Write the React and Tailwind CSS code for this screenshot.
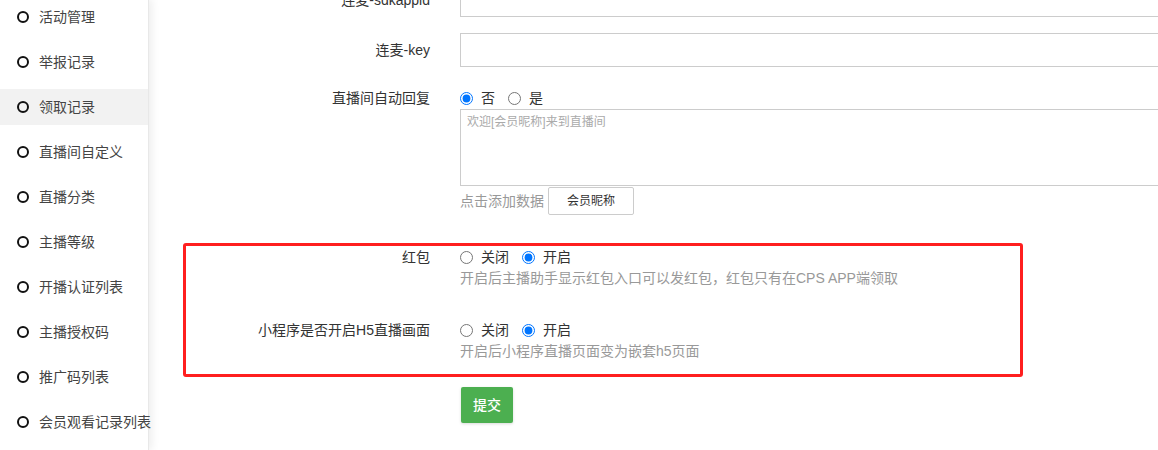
import { useState } from "react";

const menu = [
  "活动管理",
  "举报记录",
  "领取记录",
  "直播间自定义",
  "直播分类",
  "主播等级",
  "开播认证列表",
  "主播授权码",
  "推广码列表",
  "会员观看记录列表",
];

const Radio = ({ name, options, value, onChange }) => (
  <div className="flex items-center h-[22px]">
    {options.map((opt, i) => (
      <label
        key={opt}
        className={`flex items-center gap-[8px] ${i > 0 ? "ml-[13px]" : ""}`}
      >
        <input
          type="radio"
          name={name}
          className="m-0 w-[13px] h-[13px]"
          checked={value === opt}
          onChange={() => onChange(opt)}
        />
        <span className="text-[14px] leading-[22px] text-[#333]">{opt}</span>
      </label>
    ))}
  </div>
);

const Label = ({ children, className = "" }) => (
  <div
    className={`w-[281px] shrink-0 text-right text-[14px] text-[#333] ${className}`}
  >
    {children}
  </div>
);

const App = () => {
  const [reply, setReply] = useState("否");
  const [hongbao, setHongbao] = useState("开启");
  const [h5, setH5] = useState("开启");

  return (
    <div className="relative flex w-full h-[450px] overflow-hidden bg-white font-['Liberation_Sans','Noto_Sans_CJK_SC',sans-serif]">
      {/* 侧边菜单 */}
      <div className="w-[149px] shrink-0 bg-white border-r border-[#e8e8e8] shadow-[3px_0_8px_rgba(0,0,0,0.07)] z-10 -mt-[1px]">
        {menu.map((m) => (
          <div
            key={m}
            className={`flex items-center h-[36px] mb-[9px] pl-[17px] ${
              m === "领取记录" ? "bg-[#f2f2f2]" : ""
            }`}
          >
            <span className="w-[12px] h-[12px] rounded-full border-[2px] border-[#111] shrink-0" />
            <span className="ml-[10px] text-[14px] text-[#444] whitespace-nowrap">
              {m}
            </span>
          </div>
        ))}
      </div>

      {/* 表单 */}
      <div className="flex-1 min-w-0 overflow-hidden -mt-[17px]">
        <div className="flex items-center mb-[16px]">
          <Label className="leading-[34px]">连麦-sdkappid</Label>
          <div className="flex-1 ml-[30px]">
            <input className="block w-[calc(100%+10px)] h-[34px] border border-[#ccc] outline-none" />
          </div>
        </div>

        <div className="flex items-center mb-[20px]">
          <Label className="leading-[34px]">连麦-key</Label>
          <div className="flex-1 ml-[30px]">
            <input className="block w-[calc(100%+10px)] h-[34px] border border-[#ccc] outline-none" />
          </div>
        </div>

        <div className="flex items-start mb-[31px]">
          <Label className="leading-[22px]">直播间自动回复</Label>
          <div className="flex-1 ml-[30px]">
            <Radio
              name="reply"
              options={["否", "是"]}
              value={reply}
              onChange={setReply}
            />
            <textarea
              className="block w-[calc(100%+10px)] h-[77px] border border-[#ccc] px-[6px] py-[4px] text-[12px] leading-[16px] outline-none resize-none placeholder:text-[#aaa]"
              placeholder="欢迎[会员昵称]来到直播间"
            />
            <div className="flex items-center mt-[1px] h-[28px]">
              <span className="text-[14px] text-[#999]">点击添加数据</span>
              <button className="ml-[4px] w-[86px] h-[28px] border border-[#ccc] rounded-[2px] bg-white text-[12px] text-[#333]">
                会员昵称
              </button>
            </div>
          </div>
        </div>

        <div className="flex items-start mb-[31px]">
          <Label className="leading-[22px]">红包</Label>
          <div className="flex-1 ml-[30px]">
            <Radio
              name="hongbao"
              options={["关闭", "开启"]}
              value={hongbao}
              onChange={setHongbao}
            />
            <p className="text-[14px] leading-[20px] text-[#999]">
              开启后主播助手显示红包入口可以发红包，红包只有在CPS APP端领取
            </p>
          </div>
        </div>

        <div className="flex items-start mb-[26px]">
          <Label className="leading-[22px]">小程序是否开启H5直播画面</Label>
          <div className="flex-1 ml-[30px]">
            <Radio
              name="h5"
              options={["关闭", "开启"]}
              value={h5}
              onChange={setH5}
            />
            <p className="text-[14px] leading-[20px] text-[#999]">
              开启后小程序直播页面变为嵌套h5页面
            </p>
          </div>
        </div>

        <div className="flex">
          <div className="w-[281px] shrink-0" />
          <button className="ml-[31px] w-[52px] h-[36px] rounded-[2px] bg-[#4caf50] text-white text-[14px] font-medium shadow-[0_1px_3px_rgba(0,0,0,0.15)]">
            提交
          </button>
        </div>
      </div>

      {/* 红框标注 */}
      <div className="absolute left-[183px] top-[243px] w-[840px] h-[134px] border-[3px] border-[#ff1f1f] rounded-[3px] pointer-events-none" />
    </div>
  );
};

export default App;
